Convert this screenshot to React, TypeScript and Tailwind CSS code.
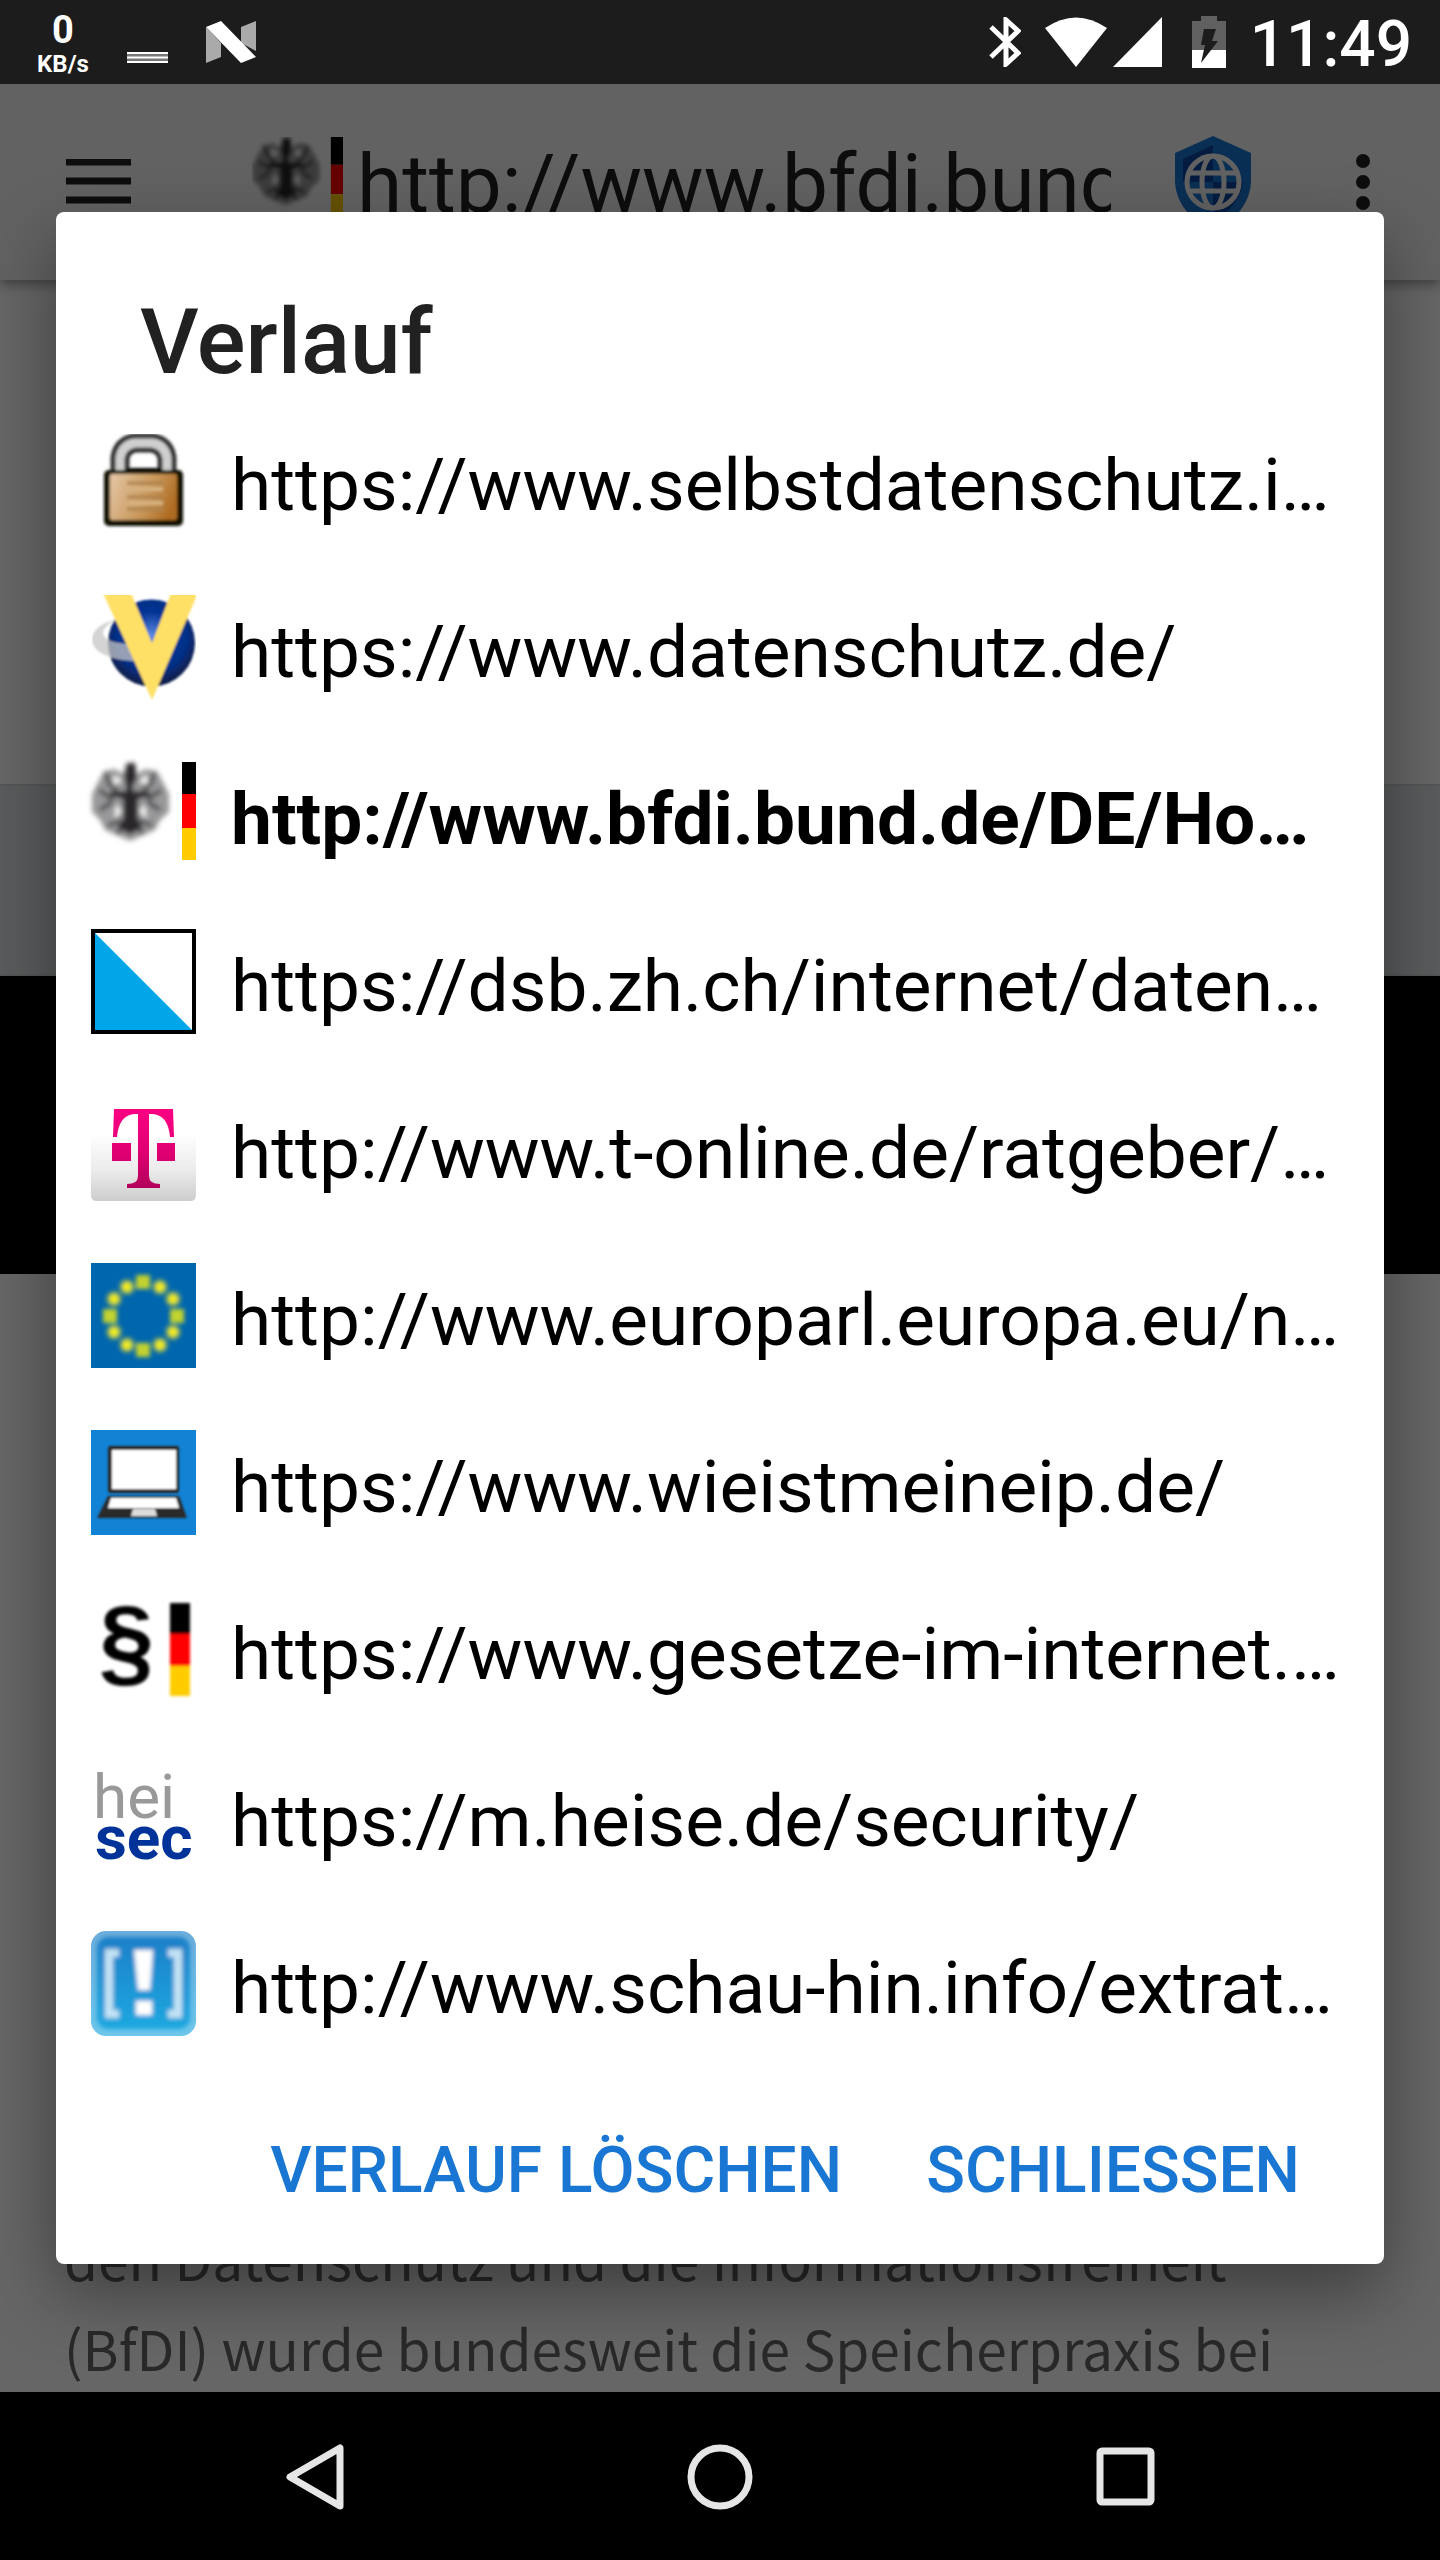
import type { ReactNode } from 'react';

function Svg({ size = '0 0 105 105', className, children }: { size?: string; className: string; children: ReactNode }) {
  return (
    <svg viewBox={size} className={className} aria-hidden="true">
      {children}
    </svg>
  );
}

const ICON = 'block h-[105px] w-[105px] shrink-0 overflow-visible';

function LockIcon() {
  return (
    <Svg className={ICON}>
      <defs>
        <linearGradient id="brass" x1="0" y1="0.2" x2="1" y2="0.5">
          <stop offset="0" stopColor="#e2c3a0" />
          <stop offset="0.6" stopColor="#c8975a" />
          <stop offset="1" stopColor="#ae6c22" />
        </linearGradient>
        <filter id="lockSoft">
          <feGaussianBlur stdDeviation="1.5" />
        </filter>
      </defs>
      <g filter="url(#lockSoft)">
        <path d="M29 46V30q2-13 15-15h17q13 2 15 15v16" fill="none" stroke="#303030" strokeWidth="19" />
        <path d="M29 46V30q2-13 15-15h17q13 2 15 15v16" fill="none" stroke="#cfcfcf" strokeWidth="9" />
        <path d="M36 40h34v4H36z" fill="#000" />
        <rect x="13" y="42" width="79" height="56" rx="5" fill="#0c0905" />
        <rect x="19" y="46" width="67" height="46" rx="2" fill="url(#brass)" />
        <path d="M36 55h36M36 69h36M36 81h36" stroke="#ae8450" strokeWidth="3" />
        <path d="M38 61h34M38 75h34" stroke="#d6b281" strokeWidth="4" />
      </g>
    </Svg>
  );
}

function GlobeVIcon() {
  return (
    <Svg className={ICON}>
      <defs>
        <radialGradient id="orb" cx="0.5" cy="0.42" r="0.55">
          <stop offset="0" stopColor="#5a8ae6" />
          <stop offset="0.5" stopColor="#053595" />
          <stop offset="0.75" stopColor="#052f86" />
          <stop offset="1" stopColor="#0b1f4c" />
        </radialGradient>
        <filter id="orbSoft" x="0" y="0" width="1" height="1">
          <feGaussianBlur stdDeviation="0.8" />
        </filter>
        <clipPath id="tile">
          <path d="M0 0h105v105H0z" />
        </clipPath>
      </defs>
      <g clipPath="url(#tile)">
        <g filter="url(#orbSoft)">
          <circle cx="60.5" cy="48" r="43.5" fill="url(#orb)" />
          <path d="M27 25C12 26 1 35 1 45c0 12 20 21 44 21l-8-17C22 48 13 45 12 38c0-5 6-10 15-13z" fill="#c6c6c6" opacity="0.75" />
          <path d="M12-2h28l21 50L80-2h27L61 105z" fill="#ffe066" />
        </g>
      </g>
    </Svg>
  );
}

function EagleIcon({ id, className }: { id: string; className: string }) {
  return (
    <Svg className={className}>
      <defs>
        <filter id={id}>
          <feGaussianBlur stdDeviation="2.4" />
        </filter>
      </defs>
      <g filter={`url(#${id})`}>
        <path d="M13 9L5 24 1 32v18l8 8 5 10 9 4 16 7 16-7 9-4 5-10 9-8V32l-4-8-8-15-12-2-8 5-3-10h-8l-3 10-8-5z" fill="#98989a" />
        <path d="M15 11l3 11 8 6M63 11l-3 11-8 6M8 28l14 10M70 28L56 38M9 48l12-8M69 48l-12-8M17 64l12-6M61 64l-12-6M26 71l8-8M52 71l-8-8" stroke="#4c4c4e" strokeWidth="4" fill="none" />
        <path d="M24 15l5 4-5 2zM55 15l-5 4 5 2zM26 45l3 4-4 5zM53 45l-3 4 4 5z" fill="#fff" stroke="#fff" strokeWidth="2" />
        <path d="M36 1h8l2 16-4 6v6h17v5l-12 3v20l5 8-13 8-13-8 6-8V37l-13-3v-5h16v-6l-2-8z" fill="#29272a" />
      </g>
      <path d="M91 0h14v32H91z" fill="#000" />
      <path d="M91 32h14v34H91z" fill="#f00" />
      <path d="M91 66h14v32H91z" fill="#fc0" />
    </Svg>
  );
}

function ZurichIcon() {
  return (
    <Svg className={ICON}>
      <path d="M0 0h105v105H0z" fill="#000" />
      <path d="M3 3h99v99H3z" fill="#fff" />
      <path d="M3 3v98h98z" fill="#00a6e8" />
      <path d="M2 2h101v101H2z" fill="none" stroke="#000" strokeWidth="4" />
    </Svg>
  );
}

function TelekomIcon() {
  return (
    <Svg className={ICON}>
      <defs>
        <linearGradient id="paper" x1="0" y1="0" x2="0" y2="1">
          <stop offset="0.35" stopColor="#fff" />
          <stop offset="0.7" stopColor="#ececec" />
          <stop offset="1" stopColor="#cdcdcd" />
        </linearGradient>
        <linearGradient id="magenta" gradientUnits="userSpaceOnUse" x1="0" y1="13" x2="0" y2="92">
          <stop offset="0" stopColor="#fb0083" />
          <stop offset="0.6" stopColor="#dc0070" />
          <stop offset="1" stopColor="#b0005a" />
        </linearGradient>
      </defs>
      <path d="M0 0h105v99q0 6-6 6H6q-6 0-6-6z" fill="url(#paper)" />
      <path
        d="M23 13h59l1 28h-4Q77 18 60 18h-2v62q0 8 11 8v4H36v-4q11 0 11-8V18h-2Q28 18 26 41h-4zM21 47h19v18H21zM66 47h18v18H66z"
        fill="url(#magenta)"
      />
    </Svg>
  );
}

const STARS = [[69, 24], [82, 36], [82, 69], [69, 82], [36, 82], [23, 69], [23, 36], [36, 24]];
const SIDE_STARS = [[52, 19], [86, 53], [52, 87], [19, 53]];

function EuIcon() {
  return (
    <Svg className={ICON}>
      <defs>
        <filter id="starSoft">
          <feGaussianBlur stdDeviation="2" />
        </filter>
      </defs>
      <path d="M0 0h105v105H0z" fill="#0066ae" />
      <g filter="url(#starSoft)">
        {STARS.map(([x, y]) => (
          <g key={`${x}-${y}`}>
            <circle cx={x} cy={y} r="8" fill="#6fa06a" />
            <circle cx={x} cy={y} r="4.5" fill="#f5f000" />
          </g>
        ))}
        {SIDE_STARS.map(([x, y]) => (
          <rect key={`${x}-${y}`} x={x - 7} y={y - 7} width="14" height="14" fill="#c2d22e" />
        ))}
      </g>
    </Svg>
  );
}

function LaptopIcon() {
  return (
    <Svg className={ICON}>
      <defs>
        <filter id="laptopSoft">
          <feGaussianBlur stdDeviation="0.9" />
        </filter>
      </defs>
      <path d="M0 0h105v105H0z" fill="#1182d4" />
      <g filter="url(#laptopSoft)">
        <rect x="17" y="16" width="71" height="47" rx="2" fill="#2b2b2b" />
        <path d="M21 20h64v39H21z" fill="#fff" />
        <path d="M17 66h71l8 22H6z" fill="#2b2b2b" />
        <path d="M20 68h65l3 10H17z" fill="#fff" />
        <path d="M42 79h22l2 7H40z" fill="#ddd" />
      </g>
    </Svg>
  );
}

function ParagraphIcon() {
  return (
    <Svg className={ICON}>
      <defs>
        <filter id="lawSoft">
          <feGaussianBlur stdDeviation="1.8" />
        </filter>
      </defs>
      <g filter="url(#lawSoft)">
        <text x="8" y="78" fontSize="99" className="font-['Liberation_Sans'] font-bold">
          §
        </text>
        <path d="M79 6h20v31H79z" fill="#000" />
        <path d="M79 37h20v32H79z" fill="#f00" />
        <path d="M79 69h20v30H79z" fill="#fc0" />
      </g>
    </Svg>
  );
}

function HeiseIcon() {
  return (
    <Svg className={ICON}>
      <text x="2" y="54" fontSize="62" fill="#999" className="font-['Roboto']">
        hei
      </text>
      <text x="4" y="95" fontSize="62" fill="#039" className="font-['Roboto'] font-bold">
        sec
      </text>
    </Svg>
  );
}

function SchauHinIcon() {
  return (
    <Svg className={ICON}>
      <defs>
        <linearGradient id="sky" x1="0" y1="0" x2="0" y2="1">
          <stop offset="0" stopColor="#1f80c8" />
          <stop offset="1" stopColor="#1fa8e0" />
        </linearGradient>
        <filter id="skySoft">
          <feGaussianBlur stdDeviation="2" />
        </filter>
      </defs>
      <rect width="105" height="105" rx="15" fill="url(#sky)" opacity="0.65" />
      <g filter="url(#skySoft)">
        <rect x="6" y="6" width="93" height="92" rx="11" fill="url(#sky)" />
        <path d="M28 22H18v61h10M77 22h10v61H77" fill="none" stroke="#c3e3f5" strokeWidth="8" />
        <path d="M43 19h19l-3 40H47zM45 70h16v14H45z" fill="#fff" />
      </g>
    </Svg>
  );
}

const HISTORY: { url: string; icon: ReactNode; current?: boolean }[] = [
  { url: 'https://www.selbstdatenschutz.i…', icon: <LockIcon /> },
  { url: 'https://www.datenschutz.de/', icon: <GlobeVIcon /> },
  { url: 'http://www.bfdi.bund.de/DE/Ho…', icon: <EagleIcon id="eagleRow" className={ICON} />, current: true },
  { url: 'https://dsb.zh.ch/internet/daten…', icon: <ZurichIcon /> },
  { url: 'http://www.t-online.de/ratgeber/…', icon: <TelekomIcon /> },
  { url: 'http://www.europarl.europa.eu/n…', icon: <EuIcon /> },
  { url: 'https://www.wieistmeineip.de/', icon: <LaptopIcon /> },
  { url: 'https://www.gesetze-im-internet.…', icon: <ParagraphIcon /> },
  { url: 'https://m.heise.de/security/', icon: <HeiseIcon /> },
  { url: 'http://www.schau-hin.info/extrat…', icon: <SchauHinIcon /> },
];

function StatusBar() {
  return (
    <header className="flex h-[84px] shrink-0 items-center bg-[#1c1c1c] pr-7 pl-9 text-white">
      <div className="flex w-[54px] flex-col items-center pt-1.5 font-bold">
        <span className="text-[38px] leading-[38px]">0</span>
        <span className="text-2xl leading-[30px]">KB/s</span>
      </div>
      <Svg size="0 0 41 84" className="ml-[37px] h-[84px] w-[41px]">
        <path d="M0 52h41v11H0z" fill="#777" />
        <path d="M0 53h41M0 57.500h41M0 62h41" stroke="#fff" strokeWidth="2" />
      </Svg>
      <Svg size="0 0 50 42" className="ml-[38px] h-[42px] w-[50px]">
        <path d="M0 6l15 16v14L0 42zM35 6l15-6v30L35 22z" fill="#aaa" />
        <path d="M0 6l15-6 35 36-15 6z" fill="#fff" />
      </Svg>
      <div className="ml-auto flex items-center">
        <Svg size="0 0 32 50" className="h-[50px] w-8">
          <path d="M2 10l27 26-12 11V3l12 11L2 40" fill="none" stroke="#fff" strokeWidth="5" />
        </Svg>
        <Svg size="0 0 62 50" className="ml-6 h-[50px] w-[62px]">
          <path d="M0 11Q31-10 62 11L31 50z" fill="#fff" />
        </Svg>
        <Svg size="0 0 49 50" className="ml-1.5 h-[50px] w-[49px]">
          <path d="M49 0v50H0z" fill="#fff" />
        </Svg>
        <Svg size="0 0 34 52" className="ml-[30px] h-[52px] w-[34px]">
          <path d="M9 0h16v5h9v47H0V5h9z" fill="#606060" />
          <path d="M0 34h34v18H0z" fill="#fff" />
          <path d="M12 13h12l-4 12h6L9 47l4-18H9z" fill="#1c1c1c" />
        </Svg>
        <time className="ml-6 pt-1.5 text-[64px] leading-[78px] font-medium">11:49</time>
      </div>
    </header>
  );
}

function Toolbar() {
  return (
    <div className="relative flex h-[196px] shrink-0 items-center bg-[#f5f5f5] pr-[70px] pl-[66px] shadow-[0_4px_12px_rgba(0,0,0,0.4)]">
      <button aria-label="Menü" className="block">
        <Svg size="0 0 65 46" className="h-[46px] w-[65px]">
          <path d="M0 3h65M0 22h65M0 41h65" stroke="#212121" strokeWidth="7" />
        </Svg>
      </button>
      <EagleIcon id="eagleBar" className="ml-[121px] h-[91px] w-[91px] shrink-0" />
      <input
        aria-label="Adresse"
        readOnly
        value="http://www.bfdi.bund.de/DE/Home/home_node.html"
        className="ml-[14px] h-24 min-w-0 flex-1 bg-transparent pt-1 text-[82px] text-[#212121]"
      />
      <button aria-label="Privatsphäre" className="ml-16 block">
        <Svg size="0 0 76 92" className="h-[92px] w-[76px]">
          <path d="M38 0l38 17v27c0 22-15 41-38 48C15 85 0 66 0 44V17z" fill="#1976d2" />
          <path d="M38 9v37H8V23z" fill="#0d47a1" />
          <path d="M38 46h30c-2 16-14 32-30 38z" fill="#0d47a1" />
          <circle cx="38" cy="46" r="26" fill="none" stroke="#f5f5f5" strokeWidth="5" />
          <ellipse cx="38" cy="46" rx="11" ry="26" fill="none" stroke="#f5f5f5" strokeWidth="5" />
          <path d="M14 37h48M14 55h48" stroke="#f5f5f5" strokeWidth="5" />
        </Svg>
      </button>
      <button aria-label="Weitere Optionen" className="ml-[105px] block">
        <Svg size="0 0 14 56" className="h-14 w-[14px]">
          <circle cx="7" cy="7" r="7" fill="#212121" />
          <circle cx="7" cy="28" r="7" fill="#212121" />
          <circle cx="7" cy="49" r="7" fill="#212121" />
        </Svg>
      </button>
    </div>
  );
}

function HistoryDialog() {
  return (
    <div className="absolute inset-0 flex items-center justify-center overflow-hidden bg-black/60 px-14">
      <section
        role="dialog"
        aria-labelledby="history-title"
        className="w-full rounded-lg bg-white pt-[70px] pb-[30px] shadow-[0_28px_70px_rgba(0,0,0,0.4)]"
      >
        <h1 id="history-title" className="mb-[26px] pl-[84px] text-[91px] leading-[120px] font-medium text-[#212121]">
          Verlauf
        </h1>
        <ul>
          {HISTORY.map(({ url, icon, current }) => (
            <li key={url} className="h-[167px]">
              <a href="#history" className="flex items-start gap-[35px] pl-[35px] text-black">
                {icon}
                <span className={`overflow-hidden text-[73px] leading-[114px] whitespace-nowrap ${current ? 'font-bold' : ''}`}>{url}</span>
              </a>
            </li>
          ))}
        </ul>
        <div className="mt-2.5 flex justify-end gap-[84px] pr-[84px] text-[64px] leading-[126px] font-medium text-[#1976d2]">
          <button>VERLAUF LÖSCHEN</button>
          <button>SCHLIESSEN</button>
        </div>
      </section>
    </div>
  );
}

function NavigationBar() {
  return (
    <nav className="flex h-[168px] shrink-0 items-center justify-center gap-[340px] bg-black pt-0.5">
      <button aria-label="Zurück">
        <Svg size="0 0 66 66" className="h-[66px] w-[66px]">
          <path d="M59 4v58L9 33z" fill="none" stroke="#e6e6e6" strokeWidth="7" strokeLinejoin="round" />
        </Svg>
      </button>
      <button aria-label="Startseite">
        <Svg size="0 0 66 66" className="h-[66px] w-[66px]">
          <circle cx="33" cy="33" r="29" fill="none" stroke="#e6e6e6" strokeWidth="7" />
        </Svg>
      </button>
      <button aria-label="Übersicht">
        <Svg size="0 0 66 66" className="h-[66px] w-[66px]">
          <rect x="7" y="7" width="51" height="51" rx="2" fill="none" stroke="#e6e6e6" strokeWidth="7" />
        </Svg>
      </button>
    </nav>
  );
}

export default function App() {
  return (
    <div className="flex min-h-screen flex-col bg-black font-['Roboto',sans-serif]">
      <StatusBar />
      <main className="relative flex flex-1 flex-col overflow-hidden bg-white">
        <Toolbar />
        <div className="h-[504px] shrink-0" />
        <div className="h-48 shrink-0 border-y-2 border-[#d4d6d8] bg-[#dfe3e7]" />
        <div className="h-[298px] shrink-0 bg-black" />
        <p className="mt-auto px-16 font-['Noto_Sans_CJK_SC',sans-serif] text-[55px] leading-[90px] text-[#666]">
          den Datenschutz und die Informationsfreiheit
          <br />
          (BfDI) wurde bundesweit die Speicherpraxis bei
        </p>
        <HistoryDialog />
      </main>
      <NavigationBar />
    </div>
  );
}
